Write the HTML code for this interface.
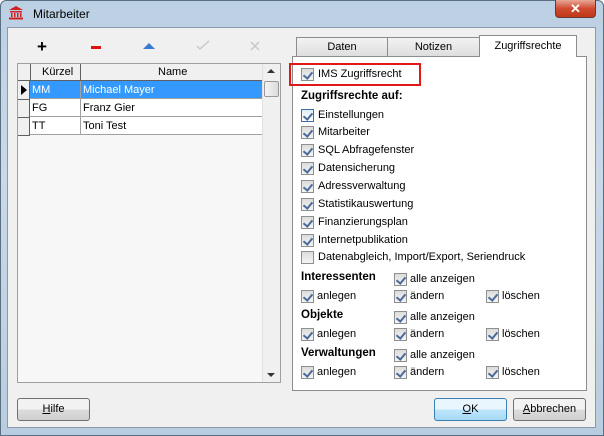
<!DOCTYPE html><html><head><style>
*{box-sizing:border-box;margin:0;padding:0}
body{width:604px;height:436px;overflow:hidden;background:#fff;font-family:"Liberation Sans",sans-serif;font-size:11px;color:#000;position:relative}
.a{position:absolute}
.win{left:0;top:0;width:604px;height:436px;background:linear-gradient(#bcd0e4,#c9d9e8 40%,#b9cde0);border:1px solid #5a6e84;border-radius:6px 6px 0 0}
.client{left:7px;top:27px;width:589px;height:401px;background:#f0f0f0;border:1px solid #8a9aac}
.cb{position:absolute;width:13px;height:13px;border:1px solid #8f8f8f;background:linear-gradient(#dcdcdc,#f4f4f4)}
.cb.c::after{content:"";position:absolute;left:3px;top:1px;width:4px;height:7px;border:solid #4a6a9a;border-width:0 2px 2px 0;transform:rotate(40deg)}
.lbl{position:absolute;white-space:nowrap}
.b{font-weight:bold;font-size:11.5px}
.btn{position:absolute;height:23px;border:1px solid #707070;border-radius:3px;background:linear-gradient(#f2f2f2 50%,#dcdcdc 50%,#cfcfcf);text-align:center;line-height:21px}
.row{position:absolute;left:0;width:262px;height:18px;border-bottom:1px solid #a0a0a0;line-height:17px}
</style></head><body>
<div class="a win"></div>
<svg class="a" style="left:8px;top:5px" width="16" height="15"><path d="M1 5 L8 1 L15 5 Z" fill="#d02020"/><rect x="2" y="6" width="12" height="1.5" fill="#d02020"/><rect x="3" y="8" width="1.5" height="4" fill="#d02020"/><rect x="6" y="8" width="1.5" height="4" fill="#d02020"/><rect x="9" y="8" width="1.5" height="4" fill="#d02020"/><rect x="12" y="8" width="1.5" height="4" fill="#d02020"/><rect x="1" y="12.5" width="14" height="2" fill="#d02020"/></svg>
<div class="lbl" style="left:33px;top:7px;font-size:12px">Mitarbeiter</div>
<div class="a" style="left:555px;top:0;width:41px;height:18px;border:1px solid #6a3a30;border-top:0;border-radius:0 0 4px 4px;background:linear-gradient(#e8a898,#d04a30 50%,#c03818);color:#fff;font-weight:bold;text-align:center;line-height:17px;font-size:13px">✕</div>
<div class="a client"></div>
<!-- toolbar -->
<div class="lbl" style="left:37px;top:37px;font-size:17px;font-weight:bold">+</div>
<div class="a" style="left:91px;top:46px;width:10px;height:3px;background:#e01010"></div>
<svg class="a" style="left:143px;top:43px" width="12" height="7"><path d="M0 6 L6 0 L12 6Z" fill="#3a7ad0"/></svg>
<svg class="a" style="left:196px;top:40px" width="14" height="10"><path d="M1 6 L4 9 L13 1" stroke="#c8c8c8" stroke-width="1.5" fill="none"/></svg>
<svg class="a" style="left:250px;top:41px" width="10" height="10"><path d="M1 1 L9 9 M9 1 L1 9" stroke="#c8c8c8" stroke-width="1.5"/></svg>
<!-- grid -->
<div class="a" style="left:17px;top:63px;width:264px;height:320px;border:1px solid #a0a0a0;background:#f7f7f7">
 <div class="a" style="left:0;top:0;width:244px;height:17px;background:#f0f0f0;border-bottom:1px solid #606060"></div>
 <div class="a" style="left:12px;top:0;width:1px;height:71px;background:#606060"></div>
 <div class="a" style="left:62px;top:0;width:1px;height:17px;background:#606060"></div>
 <div class="lbl" style="left:24px;top:2px">Kürzel</div>
 <div class="lbl" style="left:140px;top:2px">Name</div>
 <div class="row" style="top:17px;width:244px;background:#3399ff;color:#fff"><span class="a" style="left:14px;top:1px">MM</span><span class="a" style="left:65px;top:1px">Michael Mayer</span></div>
 <div class="row" style="top:35px;width:244px;background:#fff"><span class="a" style="left:14px;top:1px">FG</span><span class="a" style="left:65px;top:1px">Franz Gier</span></div>
 <div class="row" style="top:53px;width:244px;background:#fff"><span class="a" style="left:14px;top:1px">TT</span><span class="a" style="left:65px;top:1px">Toni Test</span></div>
 <div class="a" style="left:0;top:17px;width:12px;height:54px;background:#f0f0f0;border-right:1px solid #606060"></div>
 <div class="a" style="left:0;top:35px;width:12px;height:1px;background:#606060"></div>
 <div class="a" style="left:0;top:53px;width:12px;height:1px;background:#606060"></div>
 <div class="a" style="left:0;top:71px;width:12px;height:1px;background:#606060"></div>
 <svg class="a" style="left:3px;top:21px" width="6" height="10"><path d="M0 0 L6 5 L0 10Z" fill="#000"/></svg>
 <div class="a" style="left:62px;top:17px;width:1px;height:54px;background:#a0a0a0"></div>
 <div class="a" style="left:244px;top:0;width:18px;height:318px;background:#f0f0f0;border-left:1px solid #e0e0e0"></div>
 <svg class="a" style="left:249px;top:5px" width="8" height="5"><path d="M0 4 L4 0 L8 4Z" fill="#333"/></svg>
 <div class="a" style="left:246px;top:17px;width:15px;height:16px;border:1px solid #999;border-radius:2px;background:linear-gradient(90deg,#f4f4f4,#dcdcdc)"></div>
 <svg class="a" style="left:249px;top:309px" width="8" height="5"><path d="M0 0 L4 4 L8 0Z" fill="#333"/></svg>
</div>
<!-- tabs -->
<div class="a" style="left:292px;top:56px;width:295px;height:335px;border:1px solid #8c8c8c;background:#fff"></div>
<div class="a" style="left:296px;top:37px;width:92px;height:20px;border:1px solid #8c8c8c;background:linear-gradient(#f2f2f2,#dedede);text-align:center;line-height:18px">Daten</div>
<div class="a" style="left:387px;top:37px;width:93px;height:20px;border:1px solid #8c8c8c;background:linear-gradient(#f2f2f2,#dedede);text-align:center;line-height:18px">Notizen</div>
<div class="a" style="left:479px;top:35px;width:98px;height:22px;border:1px solid #8c8c8c;border-bottom:0;background:#fff;text-align:center;line-height:20px">Zugriffsrechte</div>
<div class="a" style="left:289px;top:63px;width:132px;height:23px;border:2px solid #e01818"></div>
<div class="cb c" style="left:301px;top:68px"></div><div class="lbl" style="left:318px;top:68px">IMS Zugriffsrecht</div>
<div class="lbl b" style="left:301px;top:90px">Zugriffsrechte auf:</div>
<div class="cb c" style="left:301px;top:109px;border-color:#3c6ea8;background:linear-gradient(#dfeefb,#fff)"></div><div class="lbl" style="left:318px;top:109px">Einstellungen</div>
<div class="cb c" style="left:301px;top:126px"></div><div class="lbl" style="left:318px;top:126px">Mitarbeiter</div>
<div class="cb c" style="left:301px;top:144px"></div><div class="lbl" style="left:318px;top:144px">SQL Abfragefenster</div>
<div class="cb c" style="left:301px;top:162px"></div><div class="lbl" style="left:318px;top:162px">Datensicherung</div>
<div class="cb c" style="left:301px;top:180px"></div><div class="lbl" style="left:318px;top:180px">Adressverwaltung</div>
<div class="cb c" style="left:301px;top:198px"></div><div class="lbl" style="left:318px;top:198px">Statistikauswertung</div>
<div class="cb c" style="left:301px;top:216px"></div><div class="lbl" style="left:318px;top:216px">Finanzierungsplan</div>
<div class="cb c" style="left:301px;top:234px"></div><div class="lbl" style="left:318px;top:234px">Internetpublikation</div>
<div class="cb" style="left:301px;top:251px"></div><div class="lbl" style="left:318px;top:251px">Datenabgleich, Import/Export, Seriendruck</div>

<div class="lbl b" style="left:301px;top:271px">Interessenten</div>
<div class="cb c" style="left:394px;top:273px"></div><div class="lbl" style="left:410px;top:273px">alle anzeigen</div>
<div class="cb c" style="left:301px;top:290px"></div><div class="lbl" style="left:317px;top:290px">anlegen</div>
<div class="cb c" style="left:394px;top:290px"></div><div class="lbl" style="left:410px;top:290px">ändern</div>
<div class="cb c" style="left:486px;top:290px"></div><div class="lbl" style="left:502px;top:290px">löschen</div>

<div class="lbl b" style="left:301px;top:309px">Objekte</div>
<div class="cb c" style="left:394px;top:311px"></div><div class="lbl" style="left:410px;top:311px">alle anzeigen</div>
<div class="cb c" style="left:301px;top:328px"></div><div class="lbl" style="left:317px;top:328px">anlegen</div>
<div class="cb c" style="left:394px;top:328px"></div><div class="lbl" style="left:410px;top:328px">ändern</div>
<div class="cb c" style="left:486px;top:328px"></div><div class="lbl" style="left:502px;top:328px">löschen</div>

<div class="lbl b" style="left:301px;top:347px">Verwaltungen</div>
<div class="cb c" style="left:394px;top:349px"></div><div class="lbl" style="left:410px;top:349px">alle anzeigen</div>
<div class="cb c" style="left:301px;top:366px"></div><div class="lbl" style="left:317px;top:366px">anlegen</div>
<div class="cb c" style="left:394px;top:366px"></div><div class="lbl" style="left:410px;top:366px">ändern</div>
<div class="cb c" style="left:486px;top:366px"></div><div class="lbl" style="left:502px;top:366px">löschen</div>
<!-- buttons -->
<div class="btn" style="left:17px;top:398px;width:73px"><u>H</u>ilfe</div>
<div class="btn" style="left:434px;top:398px;width:73px;border-color:#3c7fb1;background:linear-gradient(#eaf6fd 50%,#bee6fd 50%,#a7d9f5)"><u>O</u>K</div>
<div class="btn" style="left:513px;top:398px;width:73px"><u>A</u>bbrechen</div>
</body></html>
